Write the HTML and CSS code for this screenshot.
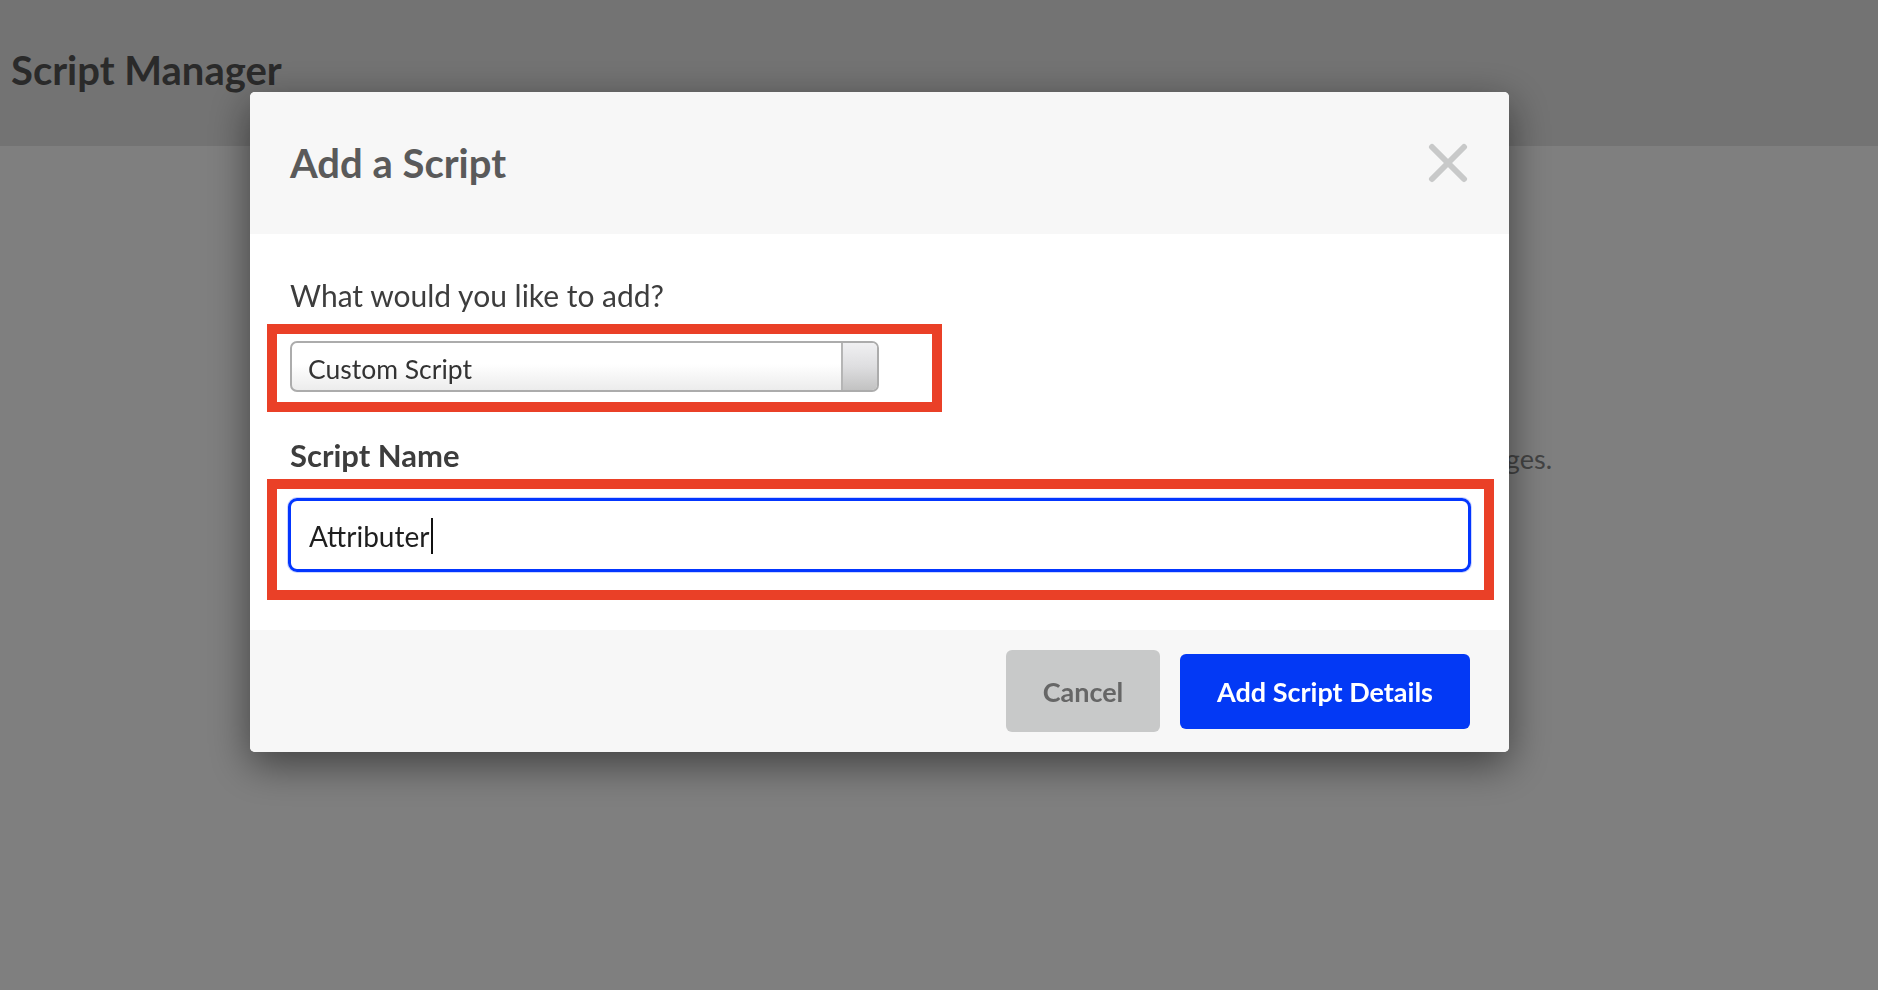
FILE: index.html
```html
<!DOCTYPE html>
<html lang="en">
<head>
    <meta charset="UTF-8">
    <meta name="viewport" content="width=device-width, initial-scale=1.0">
    <title>Script Manager</title>
    <link rel="stylesheet" href="styles.css">
</head>
<body>
    <header class="topbar">
        <h1>Script Manager</h1>
    </header>

    <main class="page">
        <p class="intro">Use the Script Manager to add tracking codes and other custom scripts to your landing pages.</p>
    </main>

    <div class="overlay">
        <div class="modal">
            <div class="modal-header">
                <h2>Add a Script</h2>
                <svg class="modal-close" width="40" height="40" viewBox="0 0 40 40">
                    <line x1="4" y1="4" x2="36" y2="36" />
                    <line x1="36" y1="4" x2="4" y2="36" />
                </svg>
            </div>

            <div class="modal-body">
                <label class="field-label">What would you like to add?</label>
                <div class="mark mark-select">
                    <div class="select">
                        <span class="select-value">Custom Script</span>
                        <span class="select-btn"></span>
                    </div>
                </div>

                <label class="field-label field-label-strong">Script Name</label>
                <div class="mark mark-input">
                    <div class="text-input">Attributer<span class="caret"></span></div>
                </div>
            </div>

            <div class="modal-footer">
                <button class="btn btn-cancel">Cancel</button>
                <button class="btn btn-primary">Add Script Details</button>
            </div>
        </div>
    </div>
</body>
</html>
```

FILE: styles.css
```css
body {
    margin: 0;
    background-color: #fefefe;
    color: #555;
    font-family: 'Lato', 'Open Sans', sans-serif;
}
.topbar {
    height: 146px;
    box-sizing: border-box;
    padding: 46px 0 0 11px;
    background-color: #e6e6e6;
}
.topbar h1 {
    margin: 0;
    font-size: 40px;
    line-height: 49px;
    font-weight: 700;
    color: #555;
}
.page {
    padding: 297px 326px 0 0;
}
.intro {
    margin: 0;
    text-align: right;
    font-size: 27px;
    line-height: 32px;
    color: #888;
    white-space: nowrap;
}
.overlay {
    position: fixed;
    inset: 0;
    background-color: rgba(0, 0, 0, 0.5);
    padding: 92px 0 0 250px;
}
.modal {
    width: 1259px;
    background-color: #fff;
    border-radius: 5px;
    overflow: hidden;
    box-shadow: 0 12px 40px rgba(0, 0, 0, 0.5);
}
.modal-header {
    height: 142px;
    box-sizing: border-box;
    padding: 47px 41px 0 40px;
    display: flex;
    justify-content: space-between;
    align-items: flex-start;
    background-color: #f7f7f7;
}
.modal-header h2 {
    margin: 0;
    font-size: 40px;
    line-height: 48px;
    font-weight: 700;
    color: #5a5a5a;
}
.modal-close {
    margin-top: 4px;
}
.modal-close line {
    stroke: #c8c9c9;
    stroke-width: 6;
    stroke-linecap: round;
}
.modal-body {
    padding: 43px 40px 30px;
}
.field-label {
    display: block;
    font-size: 30px;
    line-height: 36px;
    color: #3d3d3d;
}
.field-label-strong {
    font-size: 31px;
    font-weight: 700;
    margin-top: 25px;
}
.mark {
    border: 10px solid #ea4027;
    margin-left: -23px;
}
.mark-select {
    width: fit-content;
    margin-top: 11px;
    padding: 7px 53px 10px 13px;
}
.mark-input {
    margin-top: 6px;
    margin-right: -25px;
    padding: 9px 13px 18px 11px;
}
.select {
    width: 589px;
    height: 51px;
    box-sizing: border-box;
    display: flex;
    border: 2px solid #acacac;
    border-radius: 7px;
    overflow: hidden;
    background: linear-gradient(#ffffff, #ffffff 45%, #ececec);
}
.select-value {
    flex: 1;
    padding: 11px 0 0 16px;
    font-size: 26.5px;
    line-height: 31px;
    color: #333;
}
.select-btn {
    width: 34px;
    border-left: 2px solid #b5b5b5;
    background: linear-gradient(#f0f0f2, #dedee0 50%, #c2c2c2);
}
.text-input {
    height: 74px;
    box-sizing: border-box;
    padding: 17px 18px 0;
    border: 3px solid #0336ff;
    border-radius: 9px;
    box-shadow: 0 0 0 1px #cdd6ff;
    font-size: 28px;
    line-height: 34px;
    color: #1e1e1e;
}
.caret {
    display: inline-block;
    width: 2px;
    height: 36px;
    margin-left: 2px;
    vertical-align: -7px;
    background-color: #111;
}
.modal-footer {
    height: 122px;
    box-sizing: border-box;
    padding-right: 39px;
    display: flex;
    justify-content: flex-end;
    align-items: center;
    gap: 20px;
    background-color: #f7f7f7;
}
.btn {
    border: none;
    border-radius: 6px;
    font-family: 'Lato', 'Open Sans', sans-serif;
    font-size: 27px;
    font-weight: 700;
    cursor: pointer;
}
.btn-cancel {
    width: 154px;
    height: 82px;
    background-color: #c8c9c9;
    color: #666;
}
.btn-primary {
    width: 290px;
    height: 75px;
    background-color: #0339f5;
    color: #fff;
}
```
